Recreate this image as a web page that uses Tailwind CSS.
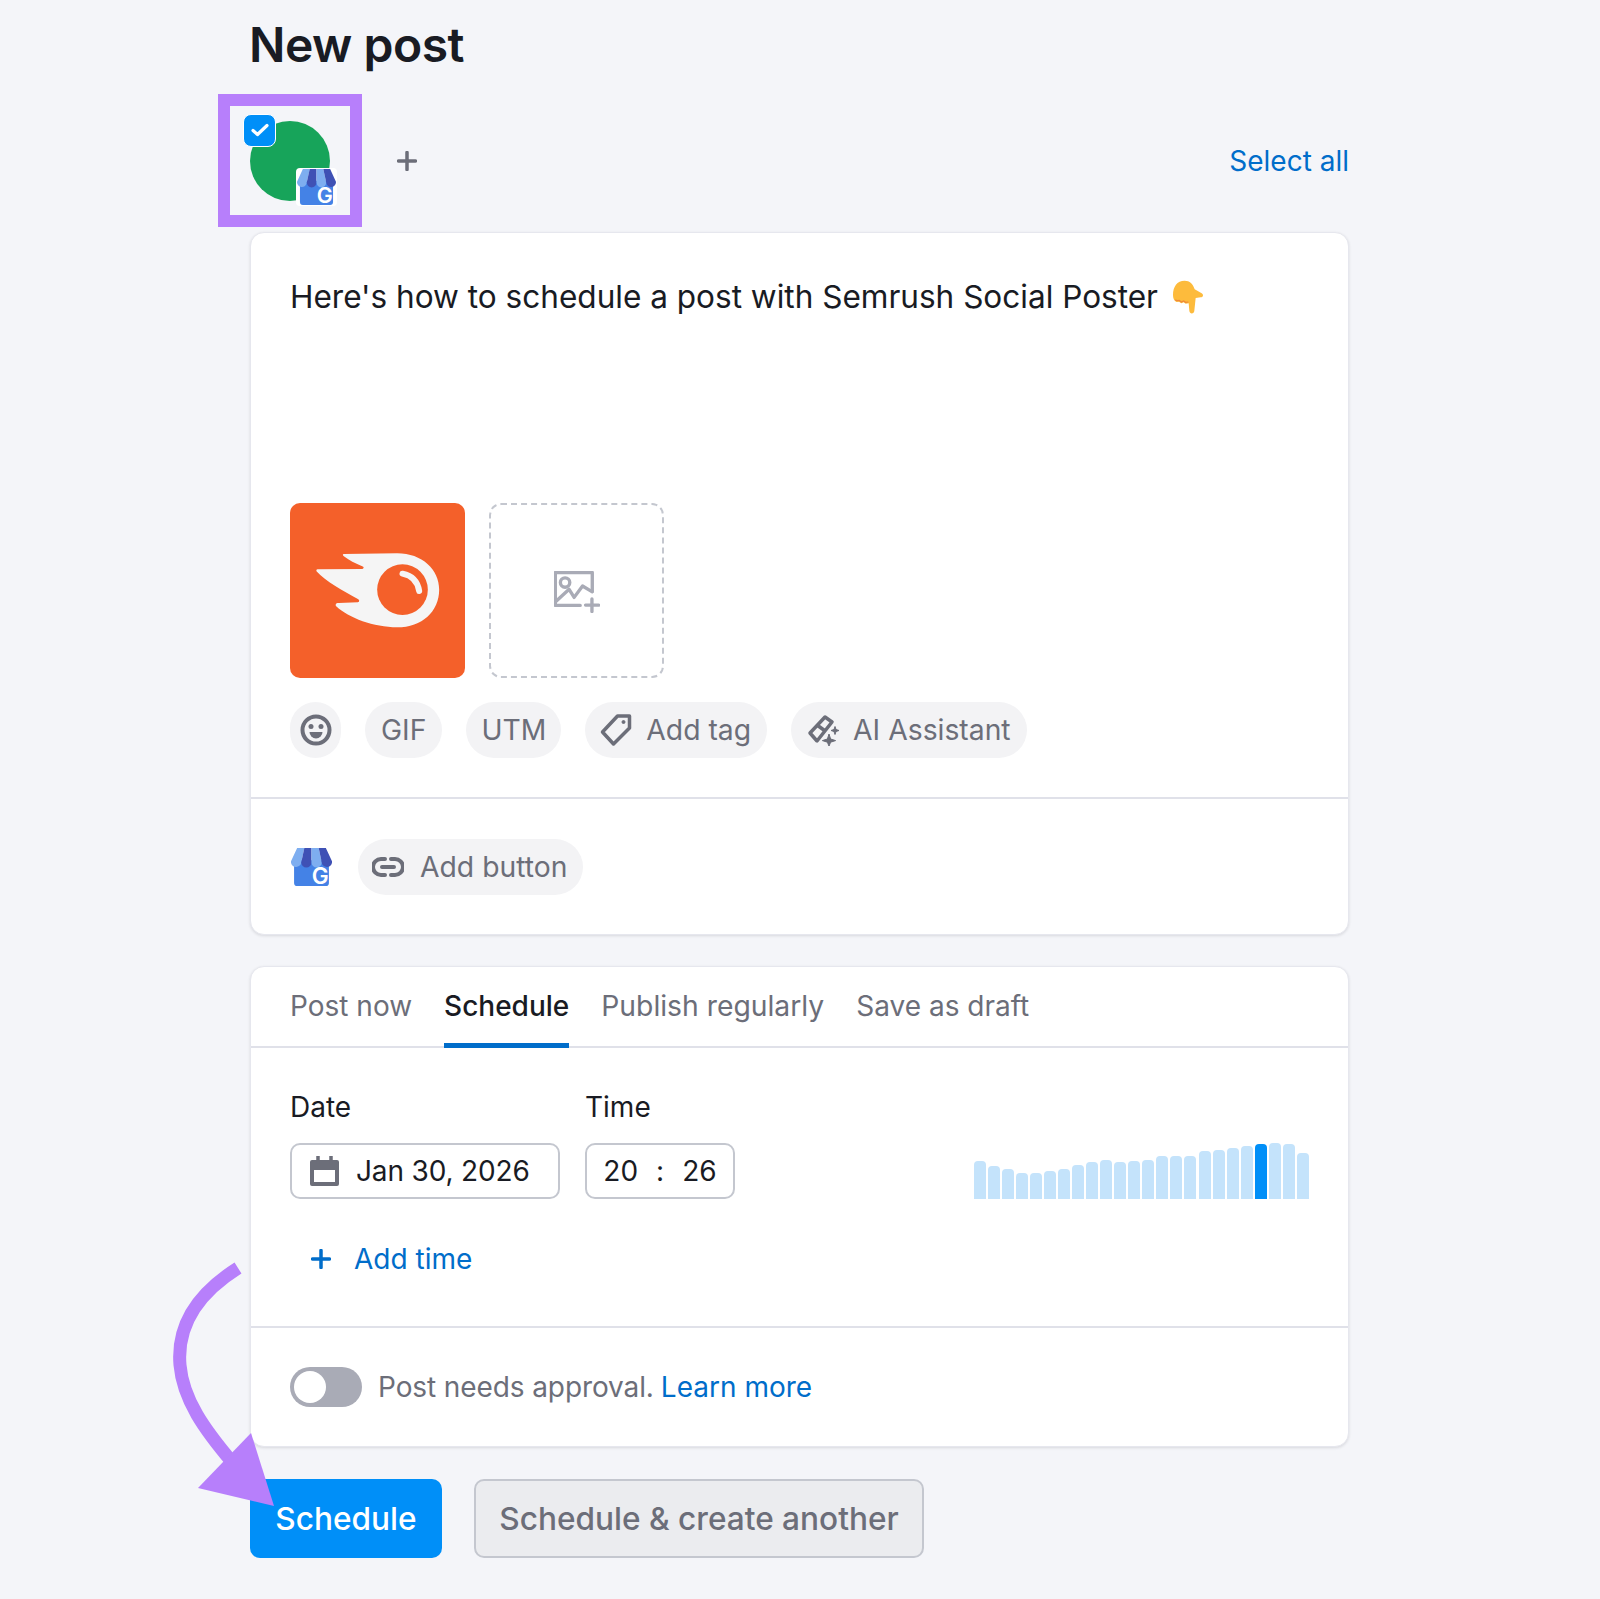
<!DOCTYPE html>
<html lang="en">
<head>
  <meta charset="UTF-8" />
  <title>New post</title>
  <script src="https://cdn.jsdelivr.net/npm/@tailwindcss/browser@4"></script>
</head>
<body class="bg-[#f4f5f9] font-['Inter',sans-serif] text-[#191b23]">
  <svg class="hidden">
    <symbol id="gbp" viewBox="0 0 40 37">
      <path d="M3 12h34v22a3 3 0 0 1-3 3H6a3 3 0 0 1-3-3z" fill="#4482e6"/>
      <path d="M6 0h7l-3 14a5 5 0 0 1-10-1z" fill="#7eaef0"/>
      <path d="M13 0h7v14a5 5 0 0 1-10 0z" fill="#3f51b5"/>
      <path d="M20 0h7l3 14a5 5 0 0 1-10 0z" fill="#7eaef0"/>
      <path d="M27 0h7l6 13a5 5 0 0 1-10 1z" fill="#3f51b5"/>
      <text x="28.500" y="35" text-anchor="middle" fill="#fff" font-family="Inter, sans-serif" font-weight="600" font-size="22">G</text>
    </symbol>
  </svg>

  <main class="relative w-[1600px] h-[1599px] overflow-hidden pl-[250px]">
    <div class="w-[1099px]">
      <h1 class="h-[94px] pt-[15px] ml-[-1px] text-[48px] leading-[60px] font-semibold tracking-[-0.5px]">New post</h1>

      <div class="flex items-center h-[138px] pb-[5px]">
        <div class="relative w-[80px] h-[80px] rounded-full bg-[#17a45a]">
          <div class="absolute left-[-7px] top-[-7px] w-[33px] h-[33px] rounded-[8px] bg-[#008ff8] border border-white flex items-center justify-center">
            <svg width="18" height="14" viewBox="0 0 18 14" fill="none" stroke="#fff" stroke-width="3.200" stroke-linecap="round" stroke-linejoin="round"><path d="M2 7.500l4.500 4L16 2.500"/></svg>
          </div>
          <div class="absolute left-[46px] top-[47px] w-[41px] h-[38px] bg-white rounded-[4px] p-[1px]">
            <svg class="w-full h-full"><use href="#gbp"/></svg>
          </div>
          <div class="absolute left-[-32px] top-[-27px] w-[144px] h-[133px] border-[12px] border-[#b77ffb]"></div>
        </div>
        <svg class="ml-[67px]" width="20" height="20" viewBox="0 0 20 20" stroke="#6c6e79" stroke-width="3.500" stroke-linecap="round"><path d="M10 1.500v17M1.500 10h17"/></svg>
        <a class="ml-auto text-[28px] text-[#006dca]">Select all</a>
      </div>

      <section class="h-[703px] bg-white rounded-[14px] border border-[#e6e7ee] shadow-[0_1px_3px_rgba(25,27,35,0.12)] overflow-hidden">
        <div class="h-[566px] px-[39px] pt-[44px] border-b-2 border-[#e0e1e9]">
          <div class="flex items-center h-[40px]">
            <p class="text-[31.550px] leading-[40px] whitespace-nowrap">Here's how to schedule a post with Semrush Social Poster</p>
            <svg class="ml-[14px]" width="32" height="34" viewBox="98 30 94 102">
              <path d="M100 75C100 50 112 32 135 32C150 32 160 42 165 58L186 70C193 75 190 82 183 82L168 84L164 122C163 133 150 133 149 122L147 100L138 101L132 97L125 100L118 95L110 96C103 92 100 85 100 75z" fill="#fdbb3c"/>
              <path d="M106 90l8 2 5-1 6 5 7-3 6 4 8-1" fill="none" stroke="#ee8a3a" stroke-width="3.500"/>
            </svg>
          </div>

          <div class="flex gap-[24px] mt-[186px]">
            <div class="w-[175px] h-[175px] rounded-[10px] bg-[#f4602a]">
              <svg class="w-full h-full" viewBox="29 40 524 525">
                <path d="M190 193L350 191C425 191 476 240 476 300C476 365 425 413 350 413C280 413 205 385 167 350C163 343 168 339 175 340L232 338C238 336 237 331 232 328C190 305 135 275 108 245C106 240 110 239 115 239L245 238C252 236 250 232 245 230C225 222 205 212 190 200C186 196 186 193 190 193Z" fill="#f5f5f5"/>
                <circle cx="366" cy="300" r="76" fill="#f4602a"/>
                <path d="M366 252C396 258 412 278 416 304" fill="none" stroke="#f5f5f5" stroke-width="18" stroke-linecap="round"/>
              </svg>
            </div>
            <div class="w-[175px] h-[175px] rounded-[12px] border-2 border-dashed border-[#c4c7cf] flex items-center justify-center">
              <svg class="mt-[2px] ml-[1px]" width="46" height="42" viewBox="825 244 137 124" fill="none" stroke="#a9abb6" stroke-width="10" stroke-linecap="round" stroke-linejoin="round">
                <path d="M903 346H829V248H939V305"/>
                <circle cx="858" cy="278" r="14"/>
                <path d="M832 333L870 298L885 322L910 288L938 305"/>
                <path d="M938 327V364M919 345H958"/>
              </svg>
            </div>
          </div>

          <div class="flex gap-[24px] mt-[24px] text-[28.300px] text-[#6c6e79]">
            <div class="w-[51px] h-[56px] rounded-full bg-[#f3f3f5] flex items-center justify-center">
              <svg width="32" height="32" viewBox="0 0 32 32"><circle cx="16" cy="16" r="13.500" fill="none" stroke="#6c6e79" stroke-width="4"/><circle cx="11" cy="12.500" r="2.500" fill="#6c6e79"/><circle cx="21" cy="12.500" r="2.500" fill="#6c6e79"/><path d="M9.500 18h13a6.500 6.500 0 0 1-13 0z" fill="#6c6e79"/></svg>
            </div>
            <div class="h-[56px] px-[16px] rounded-full bg-[#f3f3f5] flex items-center">GIF</div>
            <div class="h-[56px] px-[15px] rounded-full bg-[#f3f3f5] flex items-center">UTM</div>
            <div class="h-[56px] pl-[14px] pr-[16px] rounded-full bg-[#f3f3f5] flex items-center gap-[14px]">
              <svg width="33" height="34" viewBox="0 0 32 34" fill="none" stroke="#6c6e79" stroke-width="3.500" stroke-linejoin="round"><path d="M3 19L18 3H30V15L14 31z"/><circle cx="24" cy="9" r="1.500" fill="#6c6e79" stroke-width="1"/></svg>
              Add tag
            </div>
            <div class="h-[56px] pl-[16px] pr-[16px] rounded-full bg-[#f3f3f5] flex items-center gap-[14px]">
              <svg width="32" height="32" viewBox="0 0 32 32" fill="none" stroke="#6c6e79" stroke-width="3.500" stroke-linejoin="round"><path d="M3 19L18 3l7 5L10 27z"/><path d="M10 11l7.500 5.500"/><path d="M22 20l1.600 5 5 1.600-5 1.600-1.600 4-1.600-4-5-1.600 5-1.600z" fill="#6c6e79" stroke-width="1"/><path d="M28 12.500l1 3 3 1-3 1-1 3-1-3-3-1 3-1z" fill="#6c6e79" stroke-width="1"/></svg>
              AI Assistant
            </div>
          </div>
        </div>

        <div class="flex items-center px-[40px] pt-[40px] gap-[26px]">
          <svg width="41" height="38"><use href="#gbp"/></svg>
          <div class="h-[56px] pl-[14px] pr-[16px] rounded-full bg-[#f3f3f5] flex items-center gap-[16px] text-[28.300px] text-[#6c6e79]">
            <svg width="32" height="22" viewBox="0 0 32 22" fill="none" stroke="#6c6e79" stroke-width="4" stroke-linecap="round"><path d="M13 3H9a8 8 0 0 0 0 16h4M19 3h4a8 8 0 0 1 0 16h-4M10 11h12"/></svg>
            Add button
          </div>
        </div>
      </section>

      <section class="h-[481px] mt-[31px] bg-white rounded-[14px] border border-[#e6e7ee] shadow-[0_1px_3px_rgba(25,27,35,0.12)] overflow-hidden">
        <div class="flex gap-[32px] h-[81px] px-[39px] border-b-2 border-[#e0e1e9] text-[28px] text-[#6c6e79]">
          <div class="pt-[18px]">Post now</div>
          <div class="pt-[18px] h-[81px] border-b-[5px] border-[#006dca] text-[#191b23] font-medium">Schedule</div>
          <div class="pt-[18px] text-[28.300px]">Publish regularly</div>
          <div class="pt-[18px]">Save as draft</div>
        </div>

        <div class="h-[280px] px-[39px] border-b-2 border-[#e0e1e9]">
          <div class="flex items-end">
            <div class="w-[270px] mr-[25px]">
              <div class="pt-[41px] pb-[18px] text-[28px] leading-[36px]">Date</div>
              <div class="h-[56px] rounded-[10px] border-2 border-[#c4c7cf] flex items-center pl-[18px] gap-[17px] text-[28px] tracking-[-0.15px]">
                <svg width="29" height="30" viewBox="0 0 29 30" fill="#6c6e79" stroke="#6c6e79" stroke-width="4"><path d="M2 6h25v22H2z" fill="none" stroke-linejoin="round"/><path d="M2 6h25v7H2z" stroke-width="2"/><path d="M8 0v8M21 0v8" stroke-width="3.500"/></svg>
                Jan 30, 2026
              </div>
            </div>
            <div class="w-[150px]">
              <div class="pt-[41px] pb-[18px] text-[28px] leading-[36px]">Time</div>
              <div class="h-[56px] rounded-[10px] border-2 border-[#c4c7cf] flex items-center justify-center gap-[18px] text-[28px]">
                <span>20</span><span>:</span><span>26</span>
              </div>
            </div>
            <div class="ml-auto w-[335px] h-[56px] flex items-end justify-between">
              <div class="w-[12px] h-[38px] rounded-t-[4px] bg-[#c4e3fb]"></div>
              <div class="w-[12px] h-[33px] rounded-t-[4px] bg-[#c4e3fb]"></div>
              <div class="w-[12px] h-[30px] rounded-t-[4px] bg-[#c4e3fb]"></div>
              <div class="w-[12px] h-[26px] rounded-t-[4px] bg-[#c4e3fb]"></div>
              <div class="w-[12px] h-[26px] rounded-t-[4px] bg-[#c4e3fb]"></div>
              <div class="w-[12px] h-[28px] rounded-t-[4px] bg-[#c4e3fb]"></div>
              <div class="w-[12px] h-[30px] rounded-t-[4px] bg-[#c4e3fb]"></div>
              <div class="w-[12px] h-[34px] rounded-t-[4px] bg-[#c4e3fb]"></div>
              <div class="w-[12px] h-[37px] rounded-t-[4px] bg-[#c4e3fb]"></div>
              <div class="w-[12px] h-[39px] rounded-t-[4px] bg-[#c4e3fb]"></div>
              <div class="w-[12px] h-[37px] rounded-t-[4px] bg-[#c4e3fb]"></div>
              <div class="w-[12px] h-[38px] rounded-t-[4px] bg-[#c4e3fb]"></div>
              <div class="w-[12px] h-[39px] rounded-t-[4px] bg-[#c4e3fb]"></div>
              <div class="w-[12px] h-[43px] rounded-t-[4px] bg-[#c4e3fb]"></div>
              <div class="w-[12px] h-[43px] rounded-t-[4px] bg-[#c4e3fb]"></div>
              <div class="w-[12px] h-[43px] rounded-t-[4px] bg-[#c4e3fb]"></div>
              <div class="w-[12px] h-[48px] rounded-t-[4px] bg-[#c4e3fb]"></div>
              <div class="w-[12px] h-[49px] rounded-t-[4px] bg-[#c4e3fb]"></div>
              <div class="w-[12px] h-[51px] rounded-t-[4px] bg-[#c4e3fb]"></div>
              <div class="w-[12px] h-[53px] rounded-t-[4px] bg-[#c4e3fb]"></div>
              <div class="w-[12px] h-[55px] rounded-t-[4px] bg-[#008ff8]"></div>
              <div class="w-[12px] h-[56px] rounded-t-[4px] bg-[#c4e3fb]"></div>
              <div class="w-[12px] h-[55px] rounded-t-[4px] bg-[#c4e3fb]"></div>
              <div class="w-[12px] h-[46px] rounded-t-[4px] bg-[#c4e3fb]"></div>
            </div>
          </div>
          <div class="flex items-center mt-[42px] pl-[21px] gap-[23px] text-[28px] leading-[36px] text-[#006dca]">
            <svg width="20" height="20" viewBox="0 0 20 20" stroke="#006dca" stroke-width="3.500" stroke-linecap="round"><path d="M10 1.500v17M1.500 10h17"/></svg>
            Add time
          </div>
        </div>

        <div class="flex items-center h-[118px] px-[39px] text-[28px] text-[#6c6e79]">
          <div class="w-[72px] h-[40px] rounded-full bg-[#a9abb6] p-[4px] mr-[16px]">
            <div class="w-[32px] h-[32px] rounded-full bg-white"></div>
          </div>
          <span class="tracking-[-0.1px] mr-[7px]">Post needs approval.</span><a class="text-[#006dca]">Learn more</a>
        </div>
      </section>

      <div class="flex gap-[32px] mt-[32px]">
        <button class="w-[192px] h-[79px] rounded-[10px] bg-[#008ff8] text-white text-[31.600px] font-medium">Schedule</button>
        <button class="w-[450px] h-[79px] rounded-[10px] bg-[#ebecef] border-2 border-[#c4c7cf] text-[#6c6e79] text-[31.600px] font-medium">Schedule &amp; create another</button>
      </div>
    </div>

    <svg class="absolute left-0 top-0 pointer-events-none" width="1600" height="1599" viewBox="0 0 1600 1599">
      <path d="M238 1268C192 1297 177 1330 180 1365C183 1400 205 1430 232 1462" fill="none" stroke="#b77ffb" stroke-width="13"/>
      <path d="M251 1433L274 1506L198 1488z" fill="#b77ffb"/>
    </svg>
  </main>
</body>
</html>
